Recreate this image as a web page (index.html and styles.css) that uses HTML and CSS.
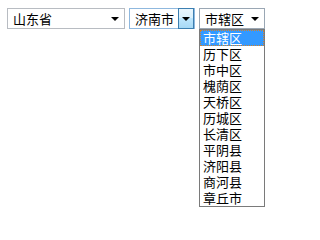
FILE: index.html
```html
<!DOCTYPE html>
<html>
<head>
<meta charset="utf-8">
<link rel="stylesheet" href="styles.css">
</head>
<body>
<div class="row">
  <div class="sel sel-prov">
    <span class="val">山东省</span>
    <span class="btn"><span class="arrow"></span></span>
  </div>
  <div class="sel sel-city hover">
    <span class="val">济南市</span>
    <span class="btn"><span class="arrow"></span></span>
  </div>
  <div class="sel sel-dist open">
    <span class="val">市辖区</span>
    <span class="btn"><span class="arrow"></span></span>
    <ul class="list">
      <li class="on">市辖区</li>
      <li>历下区</li>
      <li>市中区</li>
      <li>槐荫区</li>
      <li>天桥区</li>
      <li>历城区</li>
      <li>长清区</li>
      <li>平阴县</li>
      <li>济阳县</li>
      <li>商河县</li>
      <li>章丘市</li>
    </ul>
  </div>
</div>
</body>
</html>
```

FILE: styles.css
```css
html, body {
  margin: 0;
  padding: 0;
  background: #ffffff;
}
body {
  font-family: "Noto Sans CJK SC", "Liberation Sans", sans-serif;
  font-size: 13px;
  color: #000;
  width: 276px;
  height: 210px;
  overflow: hidden;
}
.row {
  display: flex;
  gap: 4px;
  padding: 8px 0 0 7px;
}
.sel {
  position: relative;
  box-sizing: border-box;
  height: 21px;
  border: 1px solid #b8bcc2;
  background: #fff;
  display: flex;
  align-items: center;
}
.sel-prov { width: 118px; }
.sel-city { width: 66px; border-color: #8fb8de; }
.sel-dist { width: 66px; border-color: #9aa7b4; }
.val {
  flex: 1;
  padding-left: 5px;
  line-height: 19px;
  white-space: nowrap;
}
.btn {
  box-sizing: border-box;
  width: 16px;
  height: 19px;
  display: flex;
  align-items: center;
  justify-content: center;
  margin-right: 1px;
}
.sel-city .btn {
  margin-right: 0;
  height: 21px;
  margin-top: -1px;
  margin-bottom: -1px;
  border: 1px solid #3c7fb1;
  background: linear-gradient(#eaf6fd, #d9f0fc 50%, #bee6fd 50%, #a7d9f5);
}
.arrow {
  width: 0;
  height: 0;
  border-left: 4px solid transparent;
  border-right: 4px solid transparent;
  border-top: 4px solid #000;
}
.list {
  position: absolute;
  left: -1px;
  top: 20px;
  width: 66px;
  box-sizing: border-box;
  margin: 0;
  padding: 0;
  list-style: none;
  border: 1px solid #7a7a7a;
  background: #fff;
}
.list li {
  height: 16px;
  line-height: 16px;
  padding-left: 3px;
  white-space: nowrap;
}
.list li.on {
  background: #3399ff;
  color: #fff;
  outline: 1px dotted #d2812a;
  outline-offset: -1px;
}
```
